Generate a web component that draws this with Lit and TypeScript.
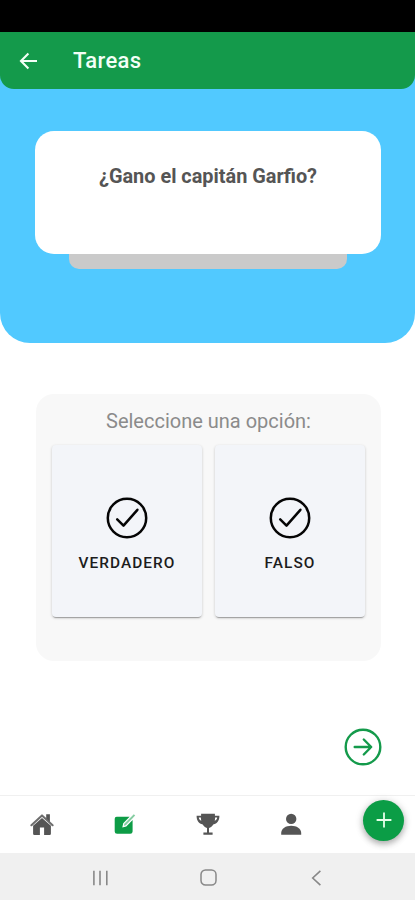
import { LitElement, html, css, svg } from "lit";
import { customElement, property } from "lit/decorators.js";

const icons = {
  back: svg`<path d="M18 9H2.2M9.4 1.6 2 9 9.4 16.4" fill="none" stroke="currentColor" stroke-width="2.1"/>`,
  check: svg`<circle cx="21" cy="21" r="19.2" fill="none" stroke="#050505" stroke-width="2.5"/><path d="M11.2 22.4 17.5 28.6 31.4 12.8" fill="none" stroke="#050505" stroke-width="2.5" stroke-linecap="round" stroke-linejoin="round"/>`,
  next: svg`<circle cx="19" cy="19" r="17.3" fill="none" stroke="currentColor" stroke-width="2.4"/><path d="M10.7 19H27M19.8 11.5 27.2 19 19.8 26.5" fill="none" stroke="currentColor" stroke-width="2.4" stroke-linecap="round" stroke-linejoin="round"/>`,
  home: svg`<path d="M12 6 20.9 13.8V21.8Q20.9 23 19.6 23H14.1V15.5H9.9V23H4.4Q3.1 23 3.1 21.8V13.8Z" fill="currentColor"/><path d="M1.4 13.2 12 3.4 22.6 13.2" fill="none" stroke="currentColor" stroke-width="2.1" stroke-linecap="round" stroke-linejoin="round" opacity=".85"/><path d="M16.2 2.2H19.9V9.9L16.2 6.6Z" fill="currentColor"/>`,
  edit: svg`<path d="M3.7 4.8H16.6L10.2 11.2 9.3 15.4 13.3 14.5 19.6 8.1V19.4Q19.6 21.8 17.2 21.8H4.1Q1.7 21.8 1.7 19.4V6.8Q1.7 4.8 3.7 4.8Z" fill="currentColor"/><path d="M10.9 13.7 11.3 11.8 20.8 2.2 22.2 3.5 12.8 13.2Z" fill="currentColor" opacity=".5"/>`,
  trophy: svg`<path d="M5.1 1.7H18.9V3.7H23.4C23.5 8.8 20.8 11.6 17.6 12.3 16.3 14.3 14.6 15.6 13 16.1V20.6H16.6V22.8H7.4V20.6H11V16.1C9.4 15.6 7.7 14.3 6.4 12.3 3.2 11.6.5 8.8.6 3.7H5.1Z" fill="currentColor"/><path d="M2.8 5.4H4.9Q4.9 7.4 5.3 8.8C3.8 8.1 3 7.1 2.8 5.4ZM21.2 5.4H19.1Q19.1 7.4 18.7 8.8C20.2 8.1 21 7.1 21.2 5.4Z" fill="#fff"/>`,
  person: svg`<circle cx="12.2" cy="6.9" r="5.2" fill="currentColor"/><path d="M2.2 22.7V21C2.2 16.6 6.9 13.8 12.2 13.8S22.2 16.6 22.2 21V22.7Z" fill="currentColor"/>`,
  plus: svg`<path d="M8 .6V15.4M.6 8H15.4" fill="none" stroke="currentColor" stroke-width="1.8"/>`,
  recents: svg`<path d="M1.9 .8V15.2M8 .8V15.2M14.8 .8V15.2" fill="none" stroke="currentColor" stroke-width="1.6"/>`,
  square: svg`<rect x="1" y="1" width="15" height="15" rx="4.5" fill="none" stroke="currentColor" stroke-width="1.5"/>`,
  chevron: svg`<path d="M9.4 .8 1.7 8 9.4 15.2" fill="none" stroke="currentColor" stroke-width="1.6"/>`,
};

@customElement("ui-icon")
class UiIcon extends LitElement {
  @property() name: keyof typeof icons = "home";
  @property({ type: Number }) w = 24;
  @property({ type: Number }) h = 24;
  static styles = css`
    :host { display: inline-flex; flex: none; }
    svg { display: block; }
  `;
  render() {
    return html`<svg width=${this.w} height=${this.h} viewBox="0 0 ${this.w} ${this.h}" aria-hidden="true">${icons[this.name]}</svg>`;
  }
}

@customElement("app-root")
class AppRoot extends LitElement {
  static styles = css`
    :host {
      display: flex;
      flex-direction: column;
      height: 900px;
      overflow: hidden;
      background: #fff;
      font-family: Roboto, "Liberation Sans", sans-serif;
    }
    * { box-sizing: border-box; }
    .status { height: 32px; background: #000; flex: none; }
    .hero {
      height: 311px;
      flex: none;
      background: #51c9ff;
      border-radius: 0 0 30px 30px;
    }
    .bar {
      height: 56.5px;
      display: flex;
      align-items: center;
      gap: 35px;
      padding: 1px 0 0 19px;
      background: #149a4b;
      color: #f3fff6;
      border-radius: 0 0 14px 14px;
    }
    .title { margin: 0; font-size: 22px; line-height: 26px; font-weight: 500; letter-spacing: 0.35px; }
    .question {
      width: 346px;
      height: 123px;
      margin: 42px 0 0 35px;
      padding-top: 33px;
      background: #fff;
      border-radius: 19px;
      color: #555;
      font-size: 19.9px;
      line-height: 25px;
      font-weight: 700;
      text-align: center;
    }
    .ledge {
      width: 278px;
      height: 15px;
      margin-left: 69px;
      background: #cacaca;
      border-radius: 0 0 10px 10px;
    }
    .panel {
      width: 345px;
      height: 267px;
      flex: none;
      margin: 51px 0 0 36px;
      padding: 14px 16px 0;
      background: #f8f8f8;
      border-radius: 18px;
    }
    .prompt { color: #8b8b8b; font-size: 20px; line-height: 26px; text-align: center; }
    .options { display: grid; grid-template-columns: 1fr 1fr; gap: 13px; margin-top: 11px; }
    .option {
      height: 172px;
      display: flex;
      flex-direction: column;
      align-items: center;
      padding: 52px 0 0;
      border: 0;
      border-radius: 4px;
      background: #f3f5f9;
      color: #1c1c1c;
      font: 500 15.4px/20px Roboto, sans-serif;
      box-shadow: 0 2px 1px -1px #0004, 0 1px 3px #0003;
    }
    .label { margin-top: 14px; letter-spacing: 1.05px; }
    .actions {
      flex: 1;
      display: flex;
      justify-content: flex-end;
      align-items: flex-start;
      padding: 67px 33px 0 0;
      color: #149a4b;
    }
    .tabs {
      height: 58px;
      flex: none;
      display: flex;
      align-items: flex-start;
      border-top: 1px solid #f0f0f0;
      color: #555;
    }
    .tab { width: 83.2px; flex: none; display: flex; justify-content: center; padding-top: 16px; }
    .active { color: #0d9c46; }
    .add {
      width: 41px;
      height: 41px;
      margin: 3.5px 0 0 30.5px;
      border-radius: 50%;
      display: flex;
      flex: none;
      align-items: center;
      justify-content: center;
      background: #0b9d46;
      color: #e6ffe9;
      box-shadow: 0 3px 6px #0004, 0 1px 10px #0002;
    }
    .system {
      height: 47px;
      flex: none;
      display: grid;
      grid-template-columns: repeat(3, 108.3px);
      justify-content: center;
      justify-items: center;
      align-items: center;
      padding: 2px 0 0 2px;
      background: #f0f0f0;
      color: #888;
    }
  `;
  render() {
    return html`
      <div class="status"></div>
      <section class="hero">
        <header class="bar">
          <ui-icon name="back" w="19" h="18"></ui-icon>
          <h1 class="title">Tareas</h1>
        </header>
        <div class="question">¿Gano el capitán Garfio?</div>
        <div class="ledge"></div>
      </section>
      <section class="panel">
        <div class="prompt">Seleccione una opción:</div>
        <div class="options">
          ${["VERDADERO", "FALSO"].map(
            (label) => html`<button class="option">
              <ui-icon name="check" w="42" h="42"></ui-icon>
              <span class="label">${label}</span>
            </button>`
          )}
        </div>
      </section>
      <div class="actions"><ui-icon name="next" w="38" h="38"></ui-icon></div>
      <nav class="tabs">
        <div class="tab"><ui-icon name="home"></ui-icon></div>
        <div class="tab active"><ui-icon name="edit"></ui-icon></div>
        <div class="tab"><ui-icon name="trophy"></ui-icon></div>
        <div class="tab"><ui-icon name="person"></ui-icon></div>
        <div class="add"><ui-icon name="plus" w="16" h="16"></ui-icon></div>
      </nav>
      <footer class="system">
        <ui-icon name="recents" w="17" h="16"></ui-icon>
        <ui-icon name="square" w="17" h="17"></ui-icon>
        <ui-icon name="chevron" w="11" h="16"></ui-icon>
      </footer>
    `;
  }
}
